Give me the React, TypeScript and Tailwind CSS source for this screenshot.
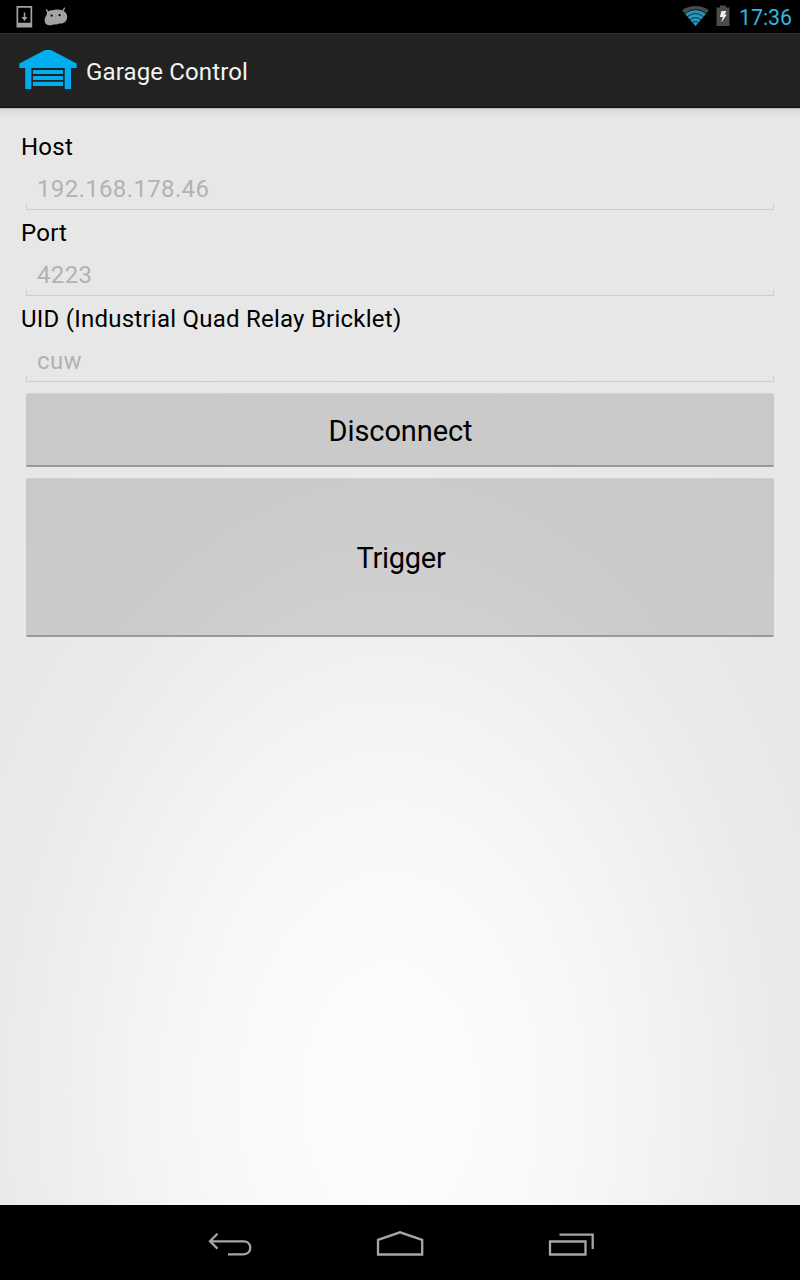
import React from "react";

function StatusBar() {
  return (
    <header className="flex h-[33px] shrink-0 items-center justify-between bg-black pl-4 pr-2">
      <svg width="60" height="33" viewBox="16 0 60 33" aria-hidden="true">
        <path fill="#a3a3a3" fillRule="evenodd" d="M16.500 6h15.700v21.500H16.500zM18.200 7.700v15h12.300v-15z" />
        <path d="M24.500 12.500v6" stroke="#a3a3a3" strokeWidth="1.500" />
        <path d="M21.500 17h6l-3 3.900z" fill="#a3a3a3" />
        <path
          d="M44.600 20.500c0-2 .7-3.600 1.900-4.900-.1-3.300 2.400-5.600 6.100-5.300 1.500-.8 3.300-1 5.100-.9 5.200.1 9.500 2.900 9.500 7.300 0 4.200-3 7.200-8 6.900-1.800 1-3.400 1.100-4.900.7-1.300.7-3 1.100-4.700 1-3-.1-5-1.800-5-4.800z"
          fill="#a3a3a3"
        />
        <path d="M46.500 9.800l2 4M64.400 8.200l-1.600 3.300" stroke="#a3a3a3" strokeWidth="1.400" strokeLinecap="round" />
        <circle cx="51.600" cy="15.600" r="1.100" fill="#000" />
        <circle cx="59.600" cy="15.200" r="1.100" fill="#000" />
      </svg>
      <div className="flex items-center">
        <svg width="52" height="33" viewBox="680 0 52 33" aria-hidden="true">
          <path d="M695.500 26L682 10.200Q695.500 1.800 709 10.200z" fill="#4b4b4b" />
          <path d="M695.500 26L685.300 14.100Q695.500 6.600 705.700 14.100z" fill="#2795bf" />
          <path
            d="M684.500 13.600Q695.500 5.300 706.500 13.600M687.300 16.700Q695.500 10.200 703.700 16.700M690 19.800Q695.500 15.300 701 19.800M692.400 22.500Q695.500 20.200 698.600 22.500"
            fill="none" stroke="#071820" strokeWidth=".8"
          />
          <path d="M716.500 7.500h3.500V5.600h6v1.900h3.500V26h-13z" fill="#4b4b4b" />
          <path d="M721.500 11h5l-2 3.600h2.400l-5.600 8 1.500-5.600h-3z" fill="#eee" />
        </svg>
        <span className="relative top-px w-[60px] whitespace-nowrap pl-[7px] text-[21.300px] leading-8 text-[#33b5e5]">17:36</span>
      </div>
    </header>
  );
}

function GarageIcon() {
  return (
    <svg width="58" height="40" viewBox="19 50 58 40" fill="#00adef" aria-hidden="true">
      <path d="M45 50h6l25.700 13.500V68H71v21h-6.300V68H31.300v21H25.200V68h-5.900v-4.500z" />
      <path d="M33 70h30v4H33zM33 76h30v4H33zM33 81.800h30v4.200H33z" />
    </svg>
  );
}

function Field({ label, value }: { label: string; value: string }) {
  return (
    <div className="flex h-[86px] flex-col">
      <label className="h-8 whitespace-nowrap text-[24px] leading-8 tracking-[0.240px] text-black">{label}</label>
      <div className="mx-[5px] flex h-[47px] flex-col justify-end">
        <span className="relative top-px h-8 pl-[11px] text-[24px] leading-8 tracking-[0.350px] text-[#b2b2b2]">{value}</span>
        <div className="h-[6px] border-x border-b border-[#cdcdcd]" />
      </div>
    </div>
  );
}

export default function App() {
  return (
    <div className="flex h-[1280px] w-[800px] flex-col overflow-hidden bg-[#e7e7e7] font-[Roboto,sans-serif]">
      <StatusBar />
      <div className="flex h-[75px] shrink-0 items-center border-b-2 border-t border-b-[#171717] border-t-[#303030] bg-[#222] pl-[19px]">
        <GarageIcon />
        <h1 className="pl-[9px] pt-[3px] text-[24px] tracking-[0.140px] text-[#f3f3f3]">Garage Control</h1>
      </div>
      <main className="flex min-h-0 flex-1 flex-col bg-[radial-gradient(560px_840px_at_390px_988px,#fcfcfc_0%,#fbfbfb_16%,#f8f8f8_32%,#f3f3f3_47%,#ebebeb_68%,#e8e8e8_84%,#e7e7e7_100%)]">
        <div className="h-[9px] shrink-0 bg-linear-to-b from-[#a8a8a8] from-0% via-[#dadada] via-16% to-transparent" />
        <form className="flex flex-col px-[21px] pt-[14px]">
          <Field label="Host" value="192.168.178.46" />
          <Field label="Port" value="4223" />
          <Field label="UID (Industrial Quad Relay Bricklet)" value="cuw" />
          <button type="button" className="mx-[5px] mt-[4px] h-[74px] rounded-[2px] border-b-2 border-t border-b-[#999] border-t-[#d2d2d2] bg-black/13 pl-px pt-1 text-[29px] tracking-[-0.080px] text-black">Disconnect</button>
          <button type="button" className="mx-[5px] mt-[11px] h-[159px] rounded-[2px] border-b-2 border-t border-b-[#999] border-t-[#d2d2d2] bg-black/13 pl-[2px] pt-1 text-[29px] tracking-[-0.250px] text-black">Trigger</button>
        </form>
      </main>
      <nav className="flex h-[75px] shrink-0 items-center justify-center bg-black">
        <svg width="400" height="75" viewBox="200 1205 400 75" fill="none" stroke="#a6a6a6" strokeWidth="2.300" aria-hidden="true">
          <path d="M217.500 1233.800l-7.500 7.400 7.500 7.400M210 1241.300h33.500c9 0 9 13 0 13H228" />
          <path d="M378 1254.500v-14.600l22-7.600 22.200 7.600v14.600z" />
          <path d="M550 1241.500h35.500v13H550zM559.500 1234.700h33.200V1249" />
        </svg>
      </nav>
    </div>
  );
}
